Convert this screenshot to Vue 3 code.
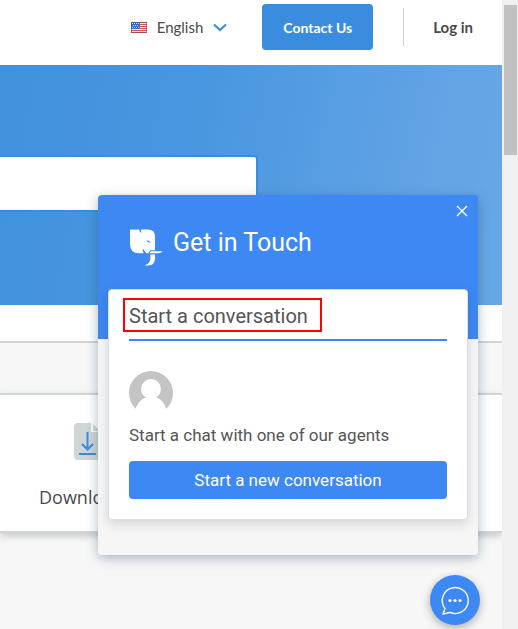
<script setup>
import { ref } from 'vue'

const language = ref('English')
const search = ref('')
const widgetOpen = ref(true)
</script>

<template>
  <div class="shell">
    <div class="page">
      <header class="topbar">
        <button class="language" type="button">
          <svg class="flag" viewBox="0 0 16 11" aria-hidden="true">
            <rect width="16" height="11" fill="#f4e4e0" />
            <path d="M0 .5h16M0 2.5h16M0 4.5h16M0 6.5h16M0 8.5h16M0 10.5h16" stroke="#dc5549" />
            <rect width="9" height="7" fill="#2f66d0" />
            <path d="M1 1.5h7M2 3.5h6M1 5.5h7" stroke="#dce9fc" stroke-dasharray="1 1" />
            <rect x=".5" y=".5" width="15" height="10" fill="none" stroke="#76504f" stroke-opacity=".6" />
          </svg>
          <span>{{ language }}</span>
          <svg class="chevron" viewBox="0 0 14 9" aria-hidden="true">
            <path d="M1 1.500l6 5.500 6-5.500" fill="none" stroke="#3a8dde" stroke-width="2.200" />
          </svg>
        </button>
        <button class="contact" type="button">Contact Us</button>
        <div class="account"><a href="#login">Log in</a></div>
      </header>

      <section class="hero">
        <input v-model="search" class="search" type="text" aria-label="Search" />
      </section>
      <div class="strip"></div>

      <main class="topics">
        <a class="topic" href="#downloads">
          <svg class="file" viewBox="0 0 32 37" aria-hidden="true">
            <path d="M4 0h13v9h15v24a4 4 0 0 1-4 4H4a4 4 0 0 1-4-4V4a4 4 0 0 1 4-4z" fill="#d0d5d5" />
            <path d="M19 1l7 7h-7z" fill="#d0d5d5" />
            <path d="M13.500 9v17M8 21l5.500 5.500L19 21M5 31h17" fill="none" stroke="#3a8dde" stroke-width="2" />
          </svg>
          <span class="topic-name">Downloads</span>
        </a>
      </main>
    </div>

    <div class="scrollbar" aria-hidden="true"><div class="thumb"></div></div>

    <section v-if="widgetOpen" class="widget" aria-label="Chat">
      <div class="banner">
        <svg class="logo" viewBox="0 0 99 110" aria-hidden="true">
          <path d="M0 4Q0 1 3 1h24l3 8 4 2-2-10h22q21 0 21 22v40H61l-6 9h-6l-9-12-3 1 4 11H27Q0 72 0 45z" fill="#fff" />
          <path d="M49 35q7-4 13 6-9 0-13-6z" fill="#3d88f3" />
          <path d="M62 66h36q-5 6-15 6H58z" fill="#fff" />
          <path d="M61 76h14v11q0 21-21 22H43q14-5 17-14 2-8 1-19z" fill="#fff" />
        </svg>
        <h1>Get in Touch</h1>
        <button class="close" type="button" aria-label="Close" @click="widgetOpen = false">
          <svg viewBox="0 0 12 12" aria-hidden="true">
            <path d="M1 1l10 10M11 1L1 11" stroke="#fff" stroke-width="1.400" />
          </svg>
        </button>
      </div>
      <div class="card">
        <h2><span class="marker"></span>Start a conversation</h2>
        <svg class="avatar" viewBox="0 0 44 44" aria-hidden="true">
          <circle cx="22" cy="22" r="22" fill="#c4c4c4" />
          <circle cx="22" cy="18" r="10" fill="#fff" />
          <path d="M6.500 38C9 31 13 27.500 18 26h8c5 1.500 9 5 11.500 12L33 44H11z" fill="#fff" />
        </svg>
        <p>Start a chat with one of our agents</p>
        <button class="start" type="button">Start a new conversation</button>
      </div>
    </section>

    <button class="launcher" type="button" aria-label="Toggle chat" @click="widgetOpen = !widgetOpen">
      <svg viewBox="0 0 28 29" aria-hidden="true">
        <path d="M4 22.500A13 13 0 1 1 9 26.400L2 28z" fill="none" stroke="#fff" stroke-width="1.400" stroke-linejoin="round" />
        <g fill="#fff"><circle cx="9" cy="14.500" r="1.600" /><circle cx="14" cy="14.500" r="1.600" /><circle cx="19" cy="14.500" r="1.600" /></g>
      </svg>
    </button>
  </div>
</template>

<style>
body {
  background: #f7f7f7;
}
</style>

<style scoped>
* {
  box-sizing: border-box;
}

button {
  border: 0;
  padding: 0;
  font-family: inherit;
  cursor: pointer;
}

a {
  color: inherit;
  text-decoration: none;
}

svg {
  display: block;
}

.shell {
  position: relative;
  display: flex;
  min-height: 100vh;
  overflow: hidden;
  font-family: Lato, sans-serif;
  color: #4a4a4a;
}

.page {
  flex: 1;
  min-width: 0;
}

.topbar {
  display: flex;
  align-items: flex-start;
  justify-content: flex-end;
  height: 65px;
  padding: 4px 29px 0 0;
  background: #fff;
}

.language {
  display: flex;
  align-items: center;
  height: 46px;
  margin-right: 35px;
  background: none;
  font-size: 15px;
  color: #4a4a4a;
}

.flag {
  width: 16px;
  height: 11px;
  margin-right: 10px;
}

.chevron {
  width: 14px;
  height: 9px;
  margin-left: 10px;
}

.contact {
  height: 46px;
  padding: 0 21px;
  border-radius: 4px;
  background: #3a8dde;
  color: #fff;
  font-size: 14px;
  font-weight: 700;
}

.account {
  display: flex;
  align-items: center;
  height: 38px;
  margin: 4px 0 0 30px;
  padding-left: 29px;
  border-left: 1px solid #d0d5d5;
  font-size: 15px;
  font-weight: 700;
}

.hero {
  height: 240px;
  padding-top: 90px;
  background: linear-gradient(102deg, #4191dd 0%, #4a97e0 40%, #64a5e5 85%, #66a7e6 100%);
}

.search {
  display: block;
  width: calc(50% + 7px);
  height: 57px;
  padding: 0 16px;
  border: 2px solid #3a8dde;
  border-left: 0;
  border-radius: 0 4px 4px 0;
  background: #fff;
  font: inherit;
  outline: 0;
}

.strip {
  height: 38px;
  border-bottom: 2px solid #d0d5d5;
  background: #fff;
}

.topics {
  padding-top: 50px;
}

.topic {
  display: flex;
  flex-direction: column;
  align-items: center;
  height: 140px;
  padding-top: 28px;
  padding-right: 322px;
  border: solid #d0d5d5;
  border-width: 2px 0;
  background: #fff;
  box-shadow: 0 3px 8px rgba(0, 0, 0, 0.2);
  font-family: "Open Sans", sans-serif;
  font-size: 18px;
  line-height: 24px;
}

.topic-name {
  width: 102px;
}

.file {
  width: 32px;
  height: 37px;
  margin-bottom: 25px;
}

.scrollbar {
  flex: none;
  width: 16px;
  padding: 5px 1px 0 2px;
  background: #f0f0f0;
}

.thumb {
  height: 150px;
  background: #c1c1c1;
}

.widget {
  position: absolute;
  right: 40px;
  bottom: 74px;
  width: 380px;
  padding-bottom: 35px;
  border-radius: 4px;
  background: linear-gradient(#3d88f3 144px, #f6f6f6 144px);
  box-shadow: 0 3px 12px rgba(40, 70, 95, 0.38);
  font-family: Roboto, sans-serif;
}

.banner {
  position: relative;
  display: flex;
  align-items: flex-start;
  gap: 10px;
  height: 94px;
  padding: 34px 32px 0;
  color: #fff;
}

.logo {
  width: 33px;
  height: 37px;
}

h1 {
  margin: 0;
  font-size: 25px;
  font-weight: 400;
  line-height: 28px;
}

.close {
  position: absolute;
  top: 10px;
  right: 10px;
  width: 12px;
  height: 12px;
  background: none;
}

.card {
  margin: 0 10px;
  padding: 12px 20px 20px;
  border: 1px solid #dcdfe2;
  border-radius: 4px;
  background: #fff;
  box-shadow: 0 4px 12px rgba(0, 0, 0, 0.14);
  color: #555;
}

h2 {
  position: relative;
  margin: 0 0 30px;
  padding: 2px 0 11px;
  border-bottom: 2px solid #3d88f3;
  font-size: 20px;
  font-weight: 400;
  line-height: 24px;
}

.marker {
  position: absolute;
  top: -4px;
  left: -6px;
  width: 199px;
  height: 34px;
  border: 2px solid #f00;
}

.avatar {
  width: 44px;
  height: 44px;
}

p {
  margin: 10px 0 16px;
  font-size: 17px;
  line-height: 20px;
}

.start {
  display: block;
  width: 100%;
  height: 38px;
  border-radius: 4px;
  background: #3d88f3;
  color: #fff;
  font-size: 17px;
  font-weight: 400;
}

.launcher {
  position: absolute;
  right: 38px;
  bottom: 4px;
  display: grid;
  place-items: center;
  width: 50px;
  height: 50px;
  border-radius: 50%;
  background: #3d88f3;
  box-shadow: 0 3px 10px rgba(0, 0, 0, 0.3);
}

.launcher svg {
  width: 28px;
  height: 29px;
}
</style>
